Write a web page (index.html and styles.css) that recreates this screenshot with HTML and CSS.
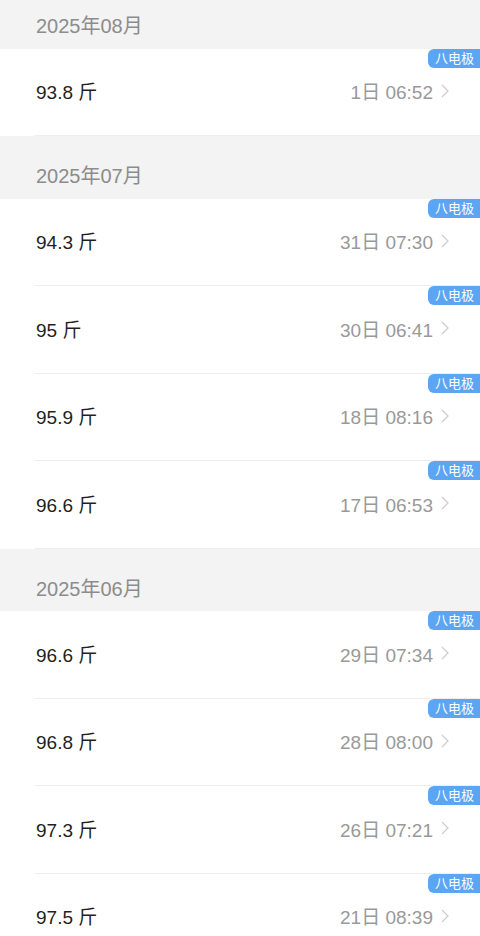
FILE: index.html
```html
<!DOCTYPE html>
<html lang="zh-CN">
<head>
    <meta charset="UTF-8">
    <meta name="viewport" content="width=device-width, initial-scale=1.0">
    <title>体重记录</title>
    <link rel="stylesheet" href="styles.css">
</head>
<body>

    <div class="record-list">

        <!-- 2025年08月 -->
        <div class="month-header">2025年08月</div>
        <div class="record-item">
            <div class="record-weight">93.8 斤</div>
            <div class="record-time">1日 06:52</div>
            <svg class="record-arrow" viewBox="0 0 8 14"><polyline points="1,1 7,7 1,13"/></svg>
            <div class="record-tag">八电极</div>
        </div>

        <!-- 2025年07月 -->
        <div class="month-header">2025年07月</div>
        <div class="record-item">
            <div class="record-weight">94.3 斤</div>
            <div class="record-time">31日 07:30</div>
            <svg class="record-arrow" viewBox="0 0 8 14"><polyline points="1,1 7,7 1,13"/></svg>
            <div class="record-tag">八电极</div>
        </div>
        <div class="record-item">
            <div class="record-weight">95 斤</div>
            <div class="record-time">30日 06:41</div>
            <svg class="record-arrow" viewBox="0 0 8 14"><polyline points="1,1 7,7 1,13"/></svg>
            <div class="record-tag">八电极</div>
        </div>
        <div class="record-item">
            <div class="record-weight">95.9 斤</div>
            <div class="record-time">18日 08:16</div>
            <svg class="record-arrow" viewBox="0 0 8 14"><polyline points="1,1 7,7 1,13"/></svg>
            <div class="record-tag">八电极</div>
        </div>
        <div class="record-item">
            <div class="record-weight">96.6 斤</div>
            <div class="record-time">17日 06:53</div>
            <svg class="record-arrow" viewBox="0 0 8 14"><polyline points="1,1 7,7 1,13"/></svg>
            <div class="record-tag">八电极</div>
        </div>

        <!-- 2025年06月 -->
        <div class="month-header">2025年06月</div>
        <div class="record-item">
            <div class="record-weight">96.6 斤</div>
            <div class="record-time">29日 07:34</div>
            <svg class="record-arrow" viewBox="0 0 8 14"><polyline points="1,1 7,7 1,13"/></svg>
            <div class="record-tag">八电极</div>
        </div>
        <div class="record-item">
            <div class="record-weight">96.8 斤</div>
            <div class="record-time">28日 08:00</div>
            <svg class="record-arrow" viewBox="0 0 8 14"><polyline points="1,1 7,7 1,13"/></svg>
            <div class="record-tag">八电极</div>
        </div>
        <div class="record-item">
            <div class="record-weight">97.3 斤</div>
            <div class="record-time">26日 07:21</div>
            <svg class="record-arrow" viewBox="0 0 8 14"><polyline points="1,1 7,7 1,13"/></svg>
            <div class="record-tag">八电极</div>
        </div>
        <div class="record-item">
            <div class="record-weight">97.5 斤</div>
            <div class="record-time">21日 08:39</div>
            <svg class="record-arrow" viewBox="0 0 8 14"><polyline points="1,1 7,7 1,13"/></svg>
            <div class="record-tag">八电极</div>
        </div>

    </div>

</body>
</html>
```

FILE: styles.css
```css
body {
    margin: 0;
    background-color: #fff;
    font-family: "Liberation Sans", "Noto Sans CJK SC", sans-serif;
    overflow: hidden;
}
.record-list {
    /* list is scrolled a little */
    margin-top: -14px;
}
.month-header {
    height: 62.5px;
    box-sizing: border-box;
    padding: 28px 0 0 36px;
    background-color: #f3f3f3;
    font-size: 20px;
    line-height: 24px;
    color: #8c8c8c;
}
.record-item {
    position: relative;
    display: flex;
    align-items: center;
    height: 87.5px;
    box-sizing: border-box;
    padding: 0 31px 3px 36px;
    background-color: #fff;
}
.record-item::after {
    content: "";
    position: absolute;
    left: 35px;
    right: 0;
    bottom: 0;
    height: 1px;
    background-color: #eeeeee;
}
.record-weight {
    flex: 1;
    font-size: 19px;
    color: #1f1f1f;
}
.record-time {
    font-size: 19px;
    color: #999;
}
.record-arrow {
    width: 8px;
    height: 14px;
    margin-left: 8px;
    fill: none;
    stroke: #cccccc;
    stroke-width: 1.2;
}
.record-tag {
    position: absolute;
    top: 0;
    right: 0;
    height: 19px;
    padding: 0 6px 0 7px;
    border-radius: 6px 0 0 6px;
    background-color: #5ca5f2;
    color: #fff;
    font-size: 13px;
    line-height: 19px;
}
```
